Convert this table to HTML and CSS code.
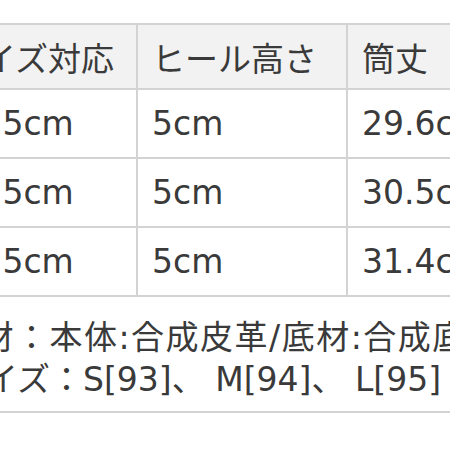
FILE: index.html
```html
<!DOCTYPE html>
<html lang="ja">
<head>
<meta charset="utf-8">
<title>サイズ表</title>
<link rel="stylesheet" href="styles.css">
</head>
<body>
<div class="sheet">
  <div class="spec">
    <div class="cell head">サイズ対応</div>
    <div class="cell head">ヒール高さ</div>
    <div class="cell head">筒丈</div>
    <div class="cell">22.5cm</div>
    <div class="cell">5cm</div>
    <div class="cell">29.6cm</div>
    <div class="cell">23.5cm</div>
    <div class="cell">5cm</div>
    <div class="cell">30.5cm</div>
    <div class="cell">24.5cm</div>
    <div class="cell">5cm</div>
    <div class="cell">31.4cm</div>
  </div>
  <div class="notes">
    <p class="material">素材：本体:合成皮革/底材:合成底材</p>
    <p>サイズ：S[93]、 M[94]、 L[95]</p>
  </div>
</div>
</body>
</html>
```

FILE: styles.css
```css
html, body {
  margin: 0;
  padding: 0;
  background: #ffffff;
}

body {
  overflow: hidden;
  font-family: "DejaVu Sans", "Noto Sans CJK JP", sans-serif;
  font-size: 33px;
  color: #3a3a3a;
}

.sheet {
  width: 720px;
  margin-left: -66px;
  padding-top: 23px;
}

.spec {
  display: grid;
  grid-template-columns: 202px 210px 240px;
  grid-auto-rows: 69px;
  grid-template-rows: 65px;
  border-top: 2px solid #d3d3d3;
  border-left: 2px solid #d3d3d3;
}

.cell {
  box-sizing: border-box;
  display: flex;
  align-items: center;
  padding-left: 14px;
  border-right: 2px solid #d3d3d3;
  border-bottom: 2px solid #d3d3d3;
  white-space: nowrap;
  overflow: hidden;
  background: #ffffff;
}

.cell.head {
  background: #f2f2f2;
}

.notes {
  padding: 20px 0 10px 18px;
  border-bottom: 2px solid #d3d3d3;
}

.notes p {
  margin: 0;
  line-height: 42px;
  white-space: nowrap;
}

.notes .material {
  letter-spacing: 1.5px;
  margin-left: -6px;
}
```
